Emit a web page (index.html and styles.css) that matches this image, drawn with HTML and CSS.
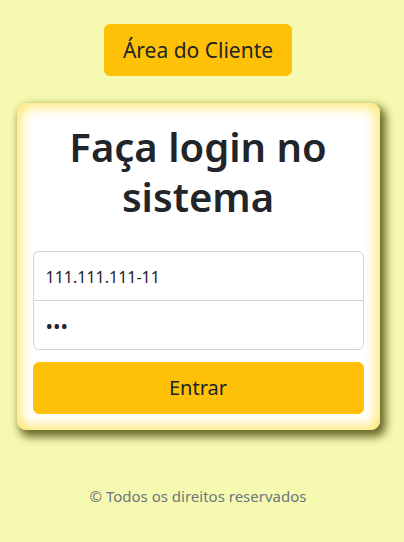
FILE: index.html
```html
<!DOCTYPE html>
<html lang="pt-BR">
<head>
<meta charset="utf-8">
<title>Login</title>
<link rel="stylesheet" href="styles.css">
</head>
<body>
<div class="page">
  <a class="btn btn-top" href="#">Área do Cliente</a>
  <form class="card">
    <h1 class="title">Faça login no sistema</h1>
    <div class="fields">
      <input class="field field-first" type="text" value="111.111.111-11">
      <input class="field field-last" type="password" value="123">
    </div>
    <button class="btn btn-block" type="button">Entrar</button>
  </form>
  <p class="footer">© Todos os direitos reservados</p>
</div>
</body>
</html>
```
FILE: styles.css
```css
* { box-sizing: border-box; }
html, body { margin: 0; padding: 0; }
body {
  background: #f6fab0;
  font-family: "Noto Sans", "Open Sans", sans-serif;
  color: #212529;
  height: 542px;
}
.page {
  display: flex;
  flex-direction: column;
  align-items: center;
  padding: 24px 24px 0 16px;
}
.btn {
  display: inline-block;
  background: #ffc107;
  color: #212529;
  border: 1px solid #ffc107;
  border-radius: 6px;
  font-family: inherit;
  font-size: 20px;
  line-height: 30px;
  padding: 10px 18px;
  text-decoration: none;
  text-align: center;
}
.btn-top { width: 188px; padding: 10px 0; font-size: 21px; }
.card {
  margin-top: 27px;
  width: 363px;
  background: #fff;
  border-radius: 9px;
  padding: 19px 16px 16px;
  box-shadow: inset 0 0 14px 3px #ffe45c, 4px 5px 9px 2px rgba(60, 60, 0, 0.75);
}
.title {
  margin: 0 0 29px;
  text-align: center;
  font-size: 40px;
  line-height: 50px;
  font-weight: 600;
}
.fields { display: flex; flex-direction: column; }
.field {
  display: block;
  width: 100%;
  height: 50px;
  border: 1px solid #ced4da;
  background: #fff;
  font-family: inherit;
  font-size: 16px;
  color: #212529;
  padding: 13px 12px 11px;
  margin: 0;
  outline: none;
}
.field-first { border-radius: 6px 6px 0 0; }
.field-last { border-radius: 0 0 6px 6px; margin-top: -1px; font-size: 20px; }
.btn-block { display: block; width: 100%; margin-top: 12px; }
.footer {
  margin: 54px 0 0;
  color: #6c757d;
  font-size: 15px;
  line-height: 24px;
}
```
